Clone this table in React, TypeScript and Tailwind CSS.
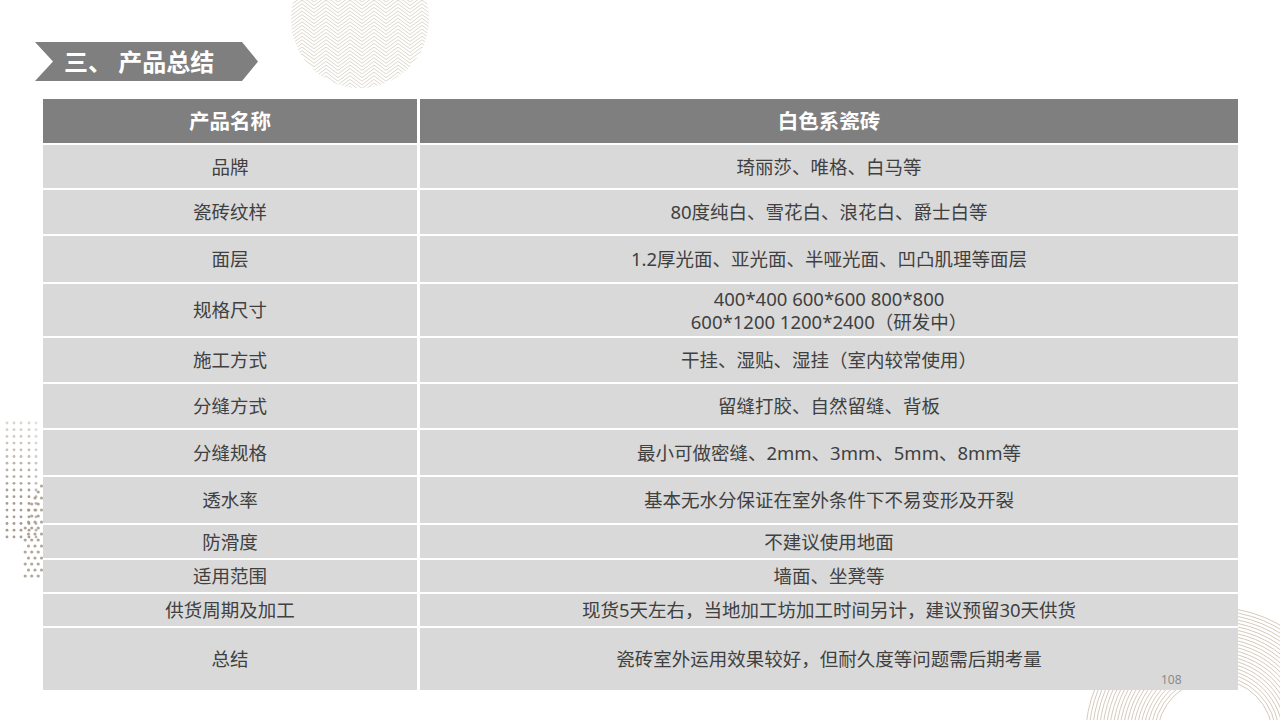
import React from "react";

const rows: { name: string; value: React.ReactNode; h: string }[] = [
  { name: "品牌", value: "琦丽莎、唯格、白马等", h: "h-[43px]" },
  { name: "瓷砖纹样", value: "80度纯白、雪花白、浪花白、爵士白等", h: "h-[44px]" },
  { name: "面层", value: "1.2厚光面、亚光面、半哑光面、凹凸肌理等面层", h: "h-[46px]" },
  {
    name: "规格尺寸",
    value: (
      <div className="flex flex-col items-center leading-[23px]">
        <span>400*400 600*600 800*800</span>
        <span>600*1200 1200*2400（研发中）</span>
      </div>
    ),
    h: "h-[52px]",
  },
  { name: "施工方式", value: "干挂、湿贴、湿挂（室内较常使用）", h: "h-[44px]" },
  { name: "分缝方式", value: "留缝打胶、自然留缝、背板", h: "h-[44px]" },
  { name: "分缝规格", value: "最小可做密缝、2mm、3mm、5mm、8mm等", h: "h-[45px]" },
  { name: "透水率", value: "基本无水分保证在室外条件下不易变形及开裂", h: "h-[46px]" },
  { name: "防滑度", value: "不建议使用地面", h: "h-[33px]" },
  { name: "适用范围", value: "墙面、坐凳等", h: "h-[32px]" },
  { name: "供货周期及加工", value: "现货5天左右，当地加工坊加工时间另计，建议预留30天供货", h: "h-[32px]" },
  { name: "总结", value: "瓷砖室外运用效果较好，但耐久度等问题需后期考量", h: "h-[62px]" },
];

function ZigzagCircle() {
  const lines: string[] = [];
  for (let k = -20; k < 60; k++) {
    const y0 = k * 3.6;
    const pts: string[] = [];
    for (let i = 0; i <= 14; i++) {
      const x = i * 12;
      const y = y0 + (i % 2 === 0 ? 0 : -9);
      pts.push(`${x},${y}`);
    }
    lines.push(pts.join(" "));
  }
  return (
    <svg className="absolute left-[290px] top-[-52px]" width="140" height="142" viewBox="0 0 140 142">
      <defs>
        <clipPath id="zc">
          <circle cx="70" cy="71" r="69" />
        </clipPath>
      </defs>
      <g clipPath="url(#zc)" fill="none" stroke="#dcd8cb" strokeWidth="1">
        {lines.map((p, i) => (
          <polyline key={i} points={p} />
        ))}
      </g>
    </svg>
  );
}

function Dots() {
  const dots: { x: number; y: number; o: number; r: number }[] = [];
  const cols = [7, 14, 21, 29, 36];
  for (let j = 0; j < 18; j++) {
    const y = 423 + j * 6.7;
    cols.forEach((x, ci) => {
      const o = Math.min(0.95, 0.4 + j * 0.05) * (ci === 4 ? 0.75 : 1);
      dots.push({ x, y, o, r: 1.4 });
    });
  }
  for (let j = 0; j < 16; j++) {
    const y = 486 + j * 6.0;
    for (let c = 0; c < 4; c++) {
      const x = 22 + c * 6.5 + (j % 2) * 3.2;
      const diag = 42 - (j < 6 ? j * 2.5 : 15);
      if (x < diag - 4 && j < 12) continue;
      if (j >= 12 && x < 24) continue;
      dots.push({ x, y, o: 0.85, r: 1.6 });
    }
  }
  return (
    <svg className="absolute left-0 top-0" width="45" height="720" viewBox="0 0 45 720">
      {dots.map((d, i) => (
        <circle key={i} cx={d.x} cy={d.y} r={d.r} fill="#a3968a" opacity={d.o} />
      ))}
    </svg>
  );
}

function Rings() {
  const rs: number[] = [];
  for (let r = 58; r <= 132; r += 3.4) rs.push(r);
  return (
    <svg className="absolute left-[1060px] top-[590px]" width="220" height="130" viewBox="1060 590 220 130">
      <g fill="none" stroke="#cfc4b3" strokeWidth="0.9">
        {rs.map((r, i) => (
          <circle key={i} cx="1215" cy="737" r={r} />
        ))}
      </g>
    </svg>
  );
}

export default function App() {
  const font = { fontFamily: "'Noto Sans','Noto Sans CJK SC',sans-serif" };
  return (
    <div className="relative w-[1280px] h-[720px] overflow-hidden bg-white" style={font}>
      <ZigzagCircle />
      <Dots />
      <Rings />
      <div className="relative flex flex-col">
        <div className="ml-[35px] mt-[42px] h-[39px] w-[223px] bg-[#7f7f7f] [clip-path:polygon(0_0,207px_0,223px_50%,207px_100%,0_100%,18px_50%)] flex items-center pl-[29px]">
          <span className="text-white text-[24px] font-bold leading-none">三、 产品总结</span>
        </div>
        <div className="ml-[43px] mt-[18px] w-[1195px] bg-white grid grid-cols-[374px_818px] gap-x-[3px] gap-y-[2px] text-[#404040] text-[18.5px]">
          <div className="h-[44px] bg-[#7f7f7f] flex items-center justify-center text-white font-bold text-[20.5px]">产品名称</div>
          <div className="h-[44px] bg-[#7f7f7f] flex items-center justify-center text-white font-bold text-[20.5px]">白色系瓷砖</div>
          {rows.map((r, i) => (
            <React.Fragment key={i}>
              <div className={`${r.h} bg-[#d9d9d9] flex items-center justify-center`}>{r.name}</div>
              <div className={`${r.h} bg-[#d9d9d9] flex items-center justify-center`}>{r.value}</div>
            </React.Fragment>
          ))}
        </div>
      </div>
      <div className="absolute left-[1161px] top-[674px] text-[12px] text-[#8a8a8a] leading-none">108</div>
    </div>
  );
}
